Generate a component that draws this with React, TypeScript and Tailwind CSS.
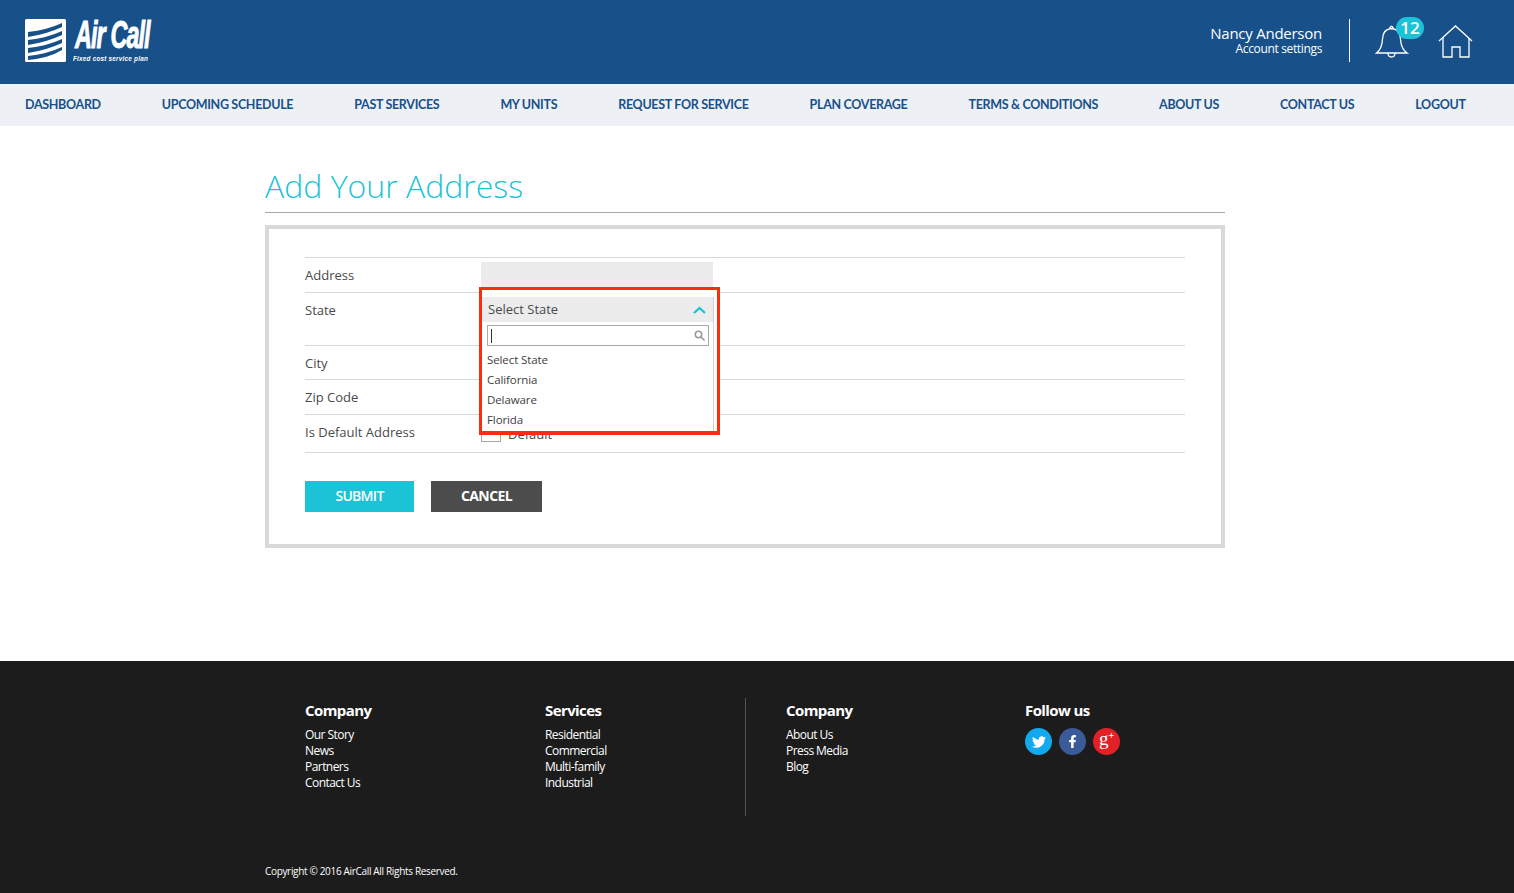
import { FaFacebookF, FaTwitter } from "react-icons/fa";

const navItems = [
  "DASHBOARD",
  "UPCOMING SCHEDULE",
  "PAST SERVICES",
  "MY UNITS",
  "REQUEST FOR SERVICE",
  "PLAN COVERAGE",
  "TERMS & CONDITIONS",
  "ABOUT US",
  "CONTACT US",
  "LOGOUT",
];

const footerCols = [
  { title: "Company", links: ["Our Story", "News", "Partners", "Contact Us"] },
  { title: "Services", links: ["Residential", "Commercial", "Multi-family", "Industrial"] },
  { title: "Company", links: ["About Us", "Press Media", "Blog"] },
];

const openSans = "font-['Open_Sans','Noto_Sans',sans-serif]";
const lato = "font-['Lato','Liberation_Sans',sans-serif]";

function Logo() {
  return (
    <div className="flex items-start">
      <svg width="42" height="44" viewBox="0 0 42 44" className="mt-[19px] ml-[25px]">
        <rect x="0" y="0" width="41" height="43" rx="1.5" fill="#fff" />
        <path d="M3 13 Q22 11 37 4 V8 Q22 15 3 18 Z" fill="#18508a" />
        <path d="M3 21 Q22 19 37 12 V16 Q22 23 3 26 Z" fill="#18508a" />
        <path d="M3 29 Q22 27 37 20 V24 Q22 31 3 34 Z" fill="#18508a" />
        <path d="M3 37 Q22 35 37 28 V31 Q24 39 3 41 Z" fill="#18508a" />
      </svg>
      <div className="mt-[15px] ml-[8px] w-[90px] text-white">
        <div className="origin-left scale-x-[0.6] font-['Liberation_Sans',sans-serif] text-[39px] leading-[40px] font-bold tracking-[-1.5px] whitespace-nowrap italic [-webkit-text-stroke:1px_white]">
          Air Call
        </div>
        <div className="ml-[-2px] origin-left scale-x-[0.79] font-['Liberation_Sans',sans-serif] text-[8px] leading-[8px] font-bold tracking-[0.3px] whitespace-nowrap italic">
          Fixed cost service plan
        </div>
      </div>
    </div>
  );
}

function Header() {
  return (
    <header className="flex h-[84px] justify-between bg-[#18508a]">
      <Logo />
      <div className="flex items-start">
        <div className={`mt-[24px] text-right text-white ${openSans}`}>
          <div className="text-[15px] leading-[19px] tracking-[-0.25px]">Nancy Anderson</div>
          <div className="mt-[-2px] text-[12px] leading-[15px] tracking-[-0.35px]">Account settings</div>
        </div>
        <div className="mt-[19px] ml-[27px] h-[43px] w-px bg-white" />
        <div className="relative mt-[24px] ml-[25px] h-[34px] w-[34px]">
          <svg width="34" height="34" viewBox="0 0 34 34" fill="none" stroke="#fff" strokeWidth="1.3">
            <path d="M1.5 29 Q7 25 7.5 15 Q8 5 16.5 4.5 Q25 5 25.5 15 Q26 25 32 29 Z" />
            <path d="M14.5 4.5 Q16.5 0 18.5 4.5" />
            <path d="M13 29 Q13 33 16.5 33 Q20 33 20 29" />
          </svg>
          <span className={`absolute top-[-7px] left-[21px] flex h-[22px] w-[28px] items-center justify-center rounded-full bg-[#1cc2d6] text-[17px] font-semibold text-white ${openSans}`}>
            12
          </span>
        </div>
        <svg width="36" height="34" viewBox="0 0 36 34" fill="none" stroke="#fff" strokeWidth="1.3" className="mt-[25px] mr-[40px] ml-[29px]">
          <path d="M1 16 L17.5 1 L34 16" />
          <path d="M5 13 V32 H14 V22 H22 V32 H31 V13" />
        </svg>
      </div>
    </header>
  );
}

function Nav() {
  return (
    <nav className={`flex h-[42px] items-center gap-[61px] bg-[#edf0f5] pl-[25px] text-[12.5px] font-bold tracking-[-0.32px] whitespace-nowrap text-[#18508a] ${lato}`}>
      {navItems.map((item) => (
        <a key={item}>{item}</a>
      ))}
    </nav>
  );
}

function StateDropdown() {
  return (
    <div className="absolute top-[-5px] left-[174px] z-10 h-[148px] w-[241px] border-[3px] border-b-4 border-[#fb2d0e] bg-white pt-[7px]">
      <div className="h-[134px] w-[232px] border-r border-[#cfcfcf]">
        <div className="flex h-[25px] items-center justify-between bg-[#ececec] pt-[1px] pr-[7px] pl-[6px] text-[13px] text-[#4a4a4a]">
          <span>Select State</span>
          <svg width="13" height="8" viewBox="0 0 13 8" fill="none" stroke="#1cc2d6" strokeWidth="2.2">
            <path d="M1 7 L6.5 2 L12 7" />
          </svg>
        </div>
        <div className="mt-[3px] ml-[5px] flex h-[21px] w-[222px] items-center justify-between border border-[#a9a9a9] pr-[3px] pl-[3px]">
          <span className="h-[14px] w-px bg-[#333]" />
          <svg width="11" height="11" viewBox="0 0 11 11" fill="none" stroke="#9a9a9a" strokeWidth="1.6">
            <circle cx="4.5" cy="4.5" r="3.2" />
            <path d="M7 7 L10.5 10.5" />
          </svg>
        </div>
        <ul className="mt-[4px] pl-[5px] text-[11.5px] leading-[20px] tracking-[-0.1px] text-[#3d3d3d]">
          <li>Select State</li>
          <li>California</li>
          <li>Delaware</li>
          <li>Florida</li>
        </ul>
      </div>
    </div>
  );
}

function FormBox() {
  return (
    <div className={`mt-[12px] h-[323px] border-4 border-[#d9d9d9] px-[36px] pt-[28px] text-[13px] text-[#4a4a4a] ${openSans}`}>
      <div className="relative">
        <div className="flex h-[35px] border-t border-[#d9d9d9]">
          <label className="w-[176px] pt-[8px] leading-[18px]">Address</label>
          <div className="mt-[4px] h-[31px] w-[232px] bg-[#ececec]" />
        </div>
        <div className="h-[53px] border-t border-[#d9d9d9] pt-[8px] leading-[18px]">State</div>
        <div className="h-[34px] border-t border-[#d9d9d9] pt-[8px] leading-[18px]">City</div>
        <div className="h-[35px] border-t border-[#d9d9d9] pt-[8px] leading-[18px]">Zip Code</div>
        <div className="flex h-[39px] border-y border-[#d9d9d9]">
          <label className="w-[176px] pt-[8px] leading-[18px]">Is Default Address</label>
          <div className="flex items-start pt-[10px]">
            <span className="h-[17px] w-[20px] border border-[#a9a9a9]" />
            <span className="ml-[7px] leading-[19px]">Default</span>
          </div>
        </div>
        <div className="absolute top-[35px] left-0 w-0">
          <StateDropdown />
        </div>
      </div>
      <div className="mt-[28px] flex gap-[17px] text-[14px] text-white">
        <button className="h-[31px] w-[109px] bg-[#1cc2d6] pb-[2px] font-semibold tracking-[-0.7px]">SUBMIT</button>
        <button className="h-[31px] w-[111px] bg-[#4c4c4c] pb-[2px] font-bold tracking-[-0.6px]">CANCEL</button>
      </div>
    </div>
  );
}

function Footer() {
  return (
    <footer className={`h-[232px] bg-[#1c1c1c] text-white ${openSans}`}>
      <div className="ml-[265px] w-[960px] pt-[37px]">
        <div className="flex h-[118px]">
          {footerCols.map((col, i) => (
            <div key={i} className={`w-[240px] pl-[40px] ${i === 2 ? "border-l border-[#555]" : ""}`}>
              <div className="mt-[2px] text-[15px] leading-[20px] font-bold tracking-[-0.6px]">{col.title}</div>
              <ul className="mt-[7px] text-[12px] leading-[16px] tracking-[-0.55px]">
                {col.links.map((link) => (
                  <li key={link}>{link}</li>
                ))}
              </ul>
            </div>
          ))}
          <div className="w-[240px] pl-[40px]">
            <div className="mt-[2px] text-[15px] leading-[20px] font-bold tracking-[-0.6px]">Follow us</div>
            <div className="mt-[8px] flex gap-[7px]">
              <span className="flex h-[27px] w-[27px] items-center justify-center rounded-full bg-[#12a9ef] text-[14px]"><FaTwitter /></span>
              <span className="flex h-[27px] w-[27px] items-center justify-center rounded-full bg-[#3b5a99] text-[13px]"><FaFacebookF /></span>
              <span className="flex h-[27px] w-[27px] items-start justify-center rounded-full bg-[#e32028] font-['Liberation_Serif',serif] text-[19px] leading-[22px]">
                g<span className="text-[10px] leading-[16px] font-bold">+</span>
              </span>
            </div>
          </div>
        </div>
        <div className="mt-[48px] text-[10px] leading-[14px] tracking-[-0.33px]">
          Copyright © 2016 AirCall All Rights Reserved.
        </div>
      </div>
    </footer>
  );
}

export default function App() {
  return (
    <div className="min-h-[893px] w-[1514px] bg-white">
      <Header />
      <Nav />
      <main className="ml-[265px] h-[535px] w-[960px]">
        <h1 className={`border-b border-[#a9a9a9] pt-[36px] pb-[2px] text-[32px] leading-[48px] font-light text-[#1cc2d6] ${openSans}`}>
          Add Your Address
        </h1>
        <FormBox />
      </main>
      <Footer />
    </div>
  );
}
